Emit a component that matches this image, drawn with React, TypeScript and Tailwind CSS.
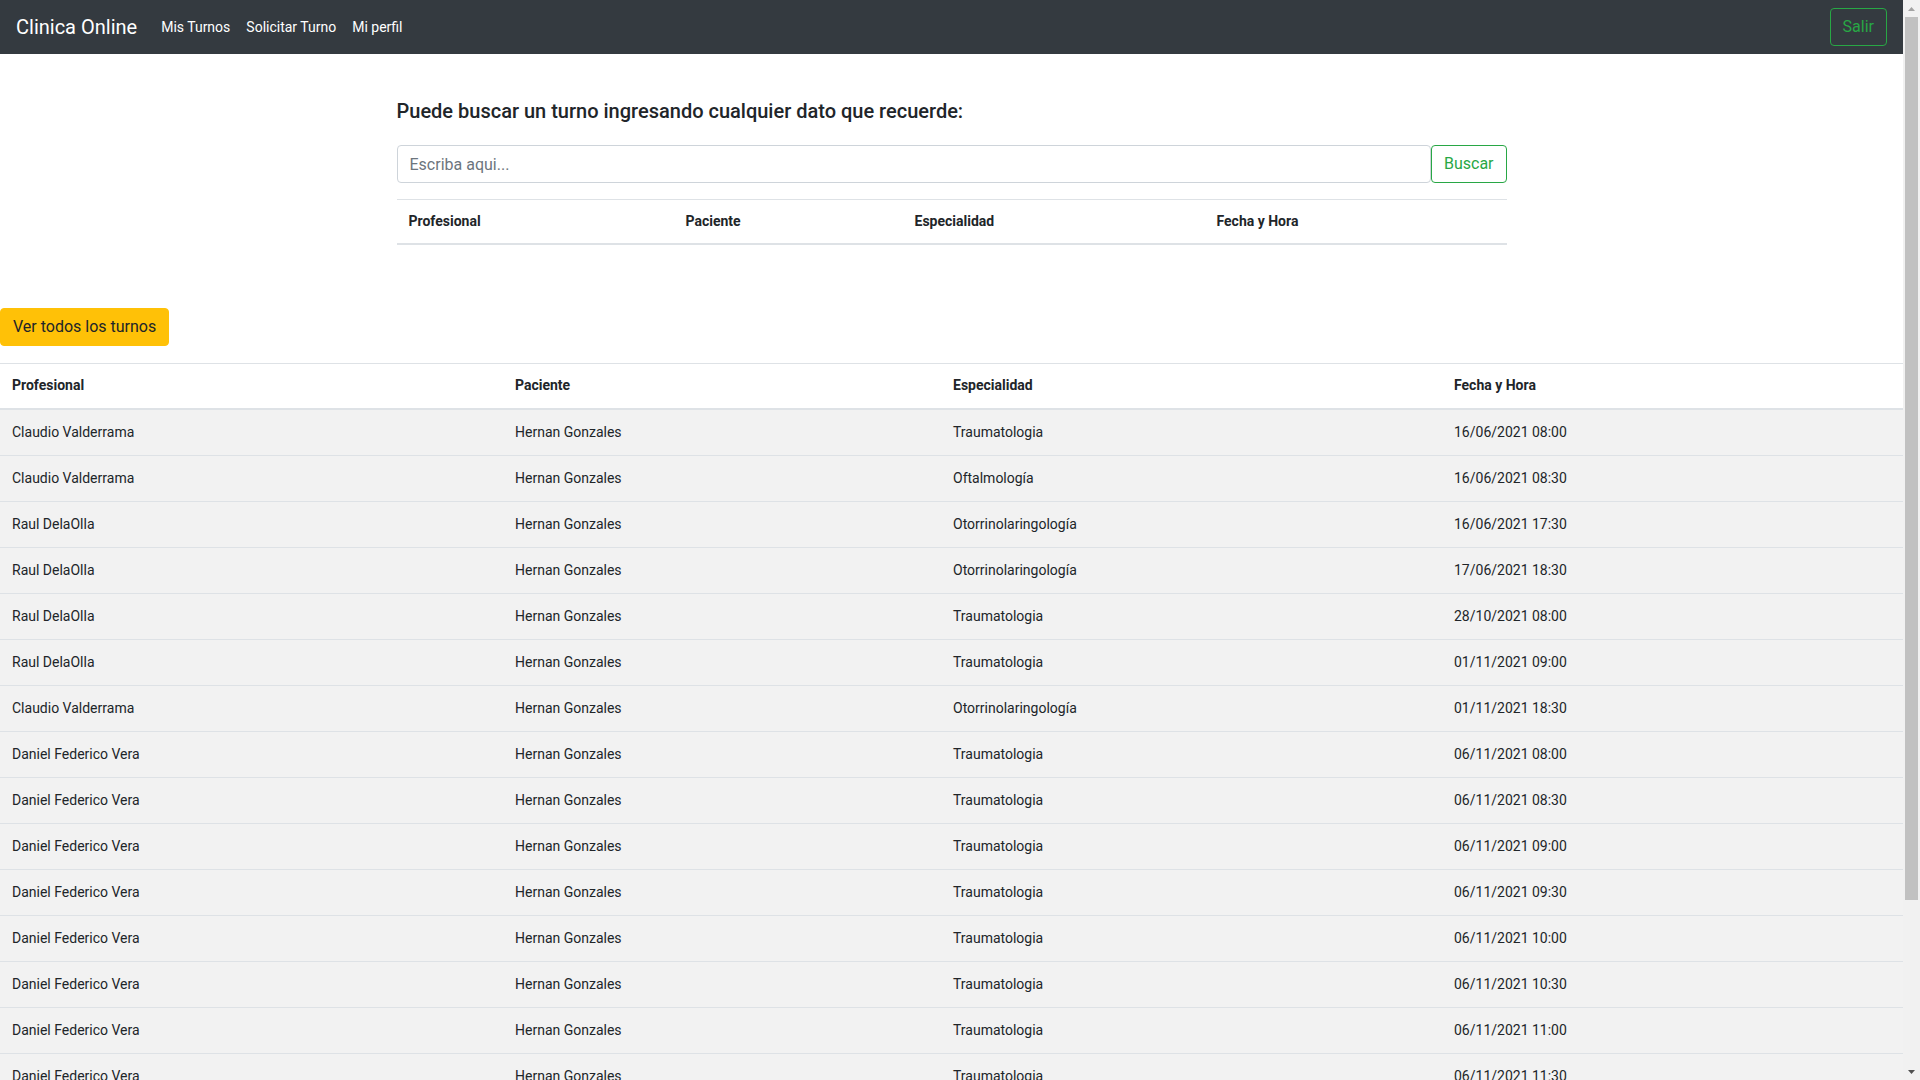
import React from 'react';

const navLinks = ['Mis Turnos', 'Solicitar Turno', 'Mi perfil'];

const turnos = [
  ['Claudio Valderrama', 'Hernan Gonzales', 'Traumatologia', '16/06/2021 08:00'],
  ['Claudio Valderrama', 'Hernan Gonzales', 'Oftalmología', '16/06/2021 08:30'],
  ['Raul DelaOlla', 'Hernan Gonzales', 'Otorrinolaringología', '16/06/2021 17:30'],
  ['Raul DelaOlla', 'Hernan Gonzales', 'Otorrinolaringología', '17/06/2021 18:30'],
  ['Raul DelaOlla', 'Hernan Gonzales', 'Traumatologia', '28/10/2021 08:00'],
  ['Raul DelaOlla', 'Hernan Gonzales', 'Traumatologia', '01/11/2021 09:00'],
  ['Claudio Valderrama', 'Hernan Gonzales', 'Otorrinolaringología', '01/11/2021 18:30'],
  ['Daniel Federico Vera', 'Hernan Gonzales', 'Traumatologia', '06/11/2021 08:00'],
  ['Daniel Federico Vera', 'Hernan Gonzales', 'Traumatologia', '06/11/2021 08:30'],
  ['Daniel Federico Vera', 'Hernan Gonzales', 'Traumatologia', '06/11/2021 09:00'],
  ['Daniel Federico Vera', 'Hernan Gonzales', 'Traumatologia', '06/11/2021 09:30'],
  ['Daniel Federico Vera', 'Hernan Gonzales', 'Traumatologia', '06/11/2021 10:00'],
  ['Daniel Federico Vera', 'Hernan Gonzales', 'Traumatologia', '06/11/2021 10:30'],
  ['Daniel Federico Vera', 'Hernan Gonzales', 'Traumatologia', '06/11/2021 11:00'],
  ['Daniel Federico Vera', 'Hernan Gonzales', 'Traumatologia', '06/11/2021 11:30'],
  ['Daniel Federico Vera', 'Hernan Gonzales', 'Traumatologia', '06/11/2021 12:00'],
  ['Daniel Federico Vera', 'Hernan Gonzales', 'Traumatologia', '06/11/2021 12:30'],
  ['Daniel Federico Vera', 'Hernan Gonzales', 'Traumatologia', '06/11/2021 13:00'],
  ['Daniel Federico Vera', 'Hernan Gonzales', 'Traumatologia', '06/11/2021 13:30'],
];

const headers = ['Profesional', 'Paciente', 'Especialidad', 'Fecha y Hora'];

function Scrollbar() {
  return (
    <div className="w-[17px] shrink-0 bg-[#f1f1f1] flex flex-col items-center">
      <div className="h-[17px] flex items-center justify-center">
        <svg width="7" height="4" viewBox="0 0 7 4">
          <path d="M0 4 L3.5 0 L7 4 Z" fill="#a3a3a3" />
        </svg>
      </div>
      <div className="w-[13px] h-[883px] bg-[#c1c1c1]" />
      <div className="flex-1" />
      <div className="h-[17px] flex items-center justify-center">
        <svg width="7" height="4" viewBox="0 0 7 4">
          <path d="M0 0 L3.5 4 L7 0 Z" fill="#505050" />
        </svg>
      </div>
    </div>
  );
}

export default function App() {
  return (
    <div className="h-screen flex bg-white text-[#212529] font-['Roboto',sans-serif]">
      <div className="flex-1 min-w-0 overflow-y-auto [scrollbar-width:none]">
        {/* Navbar */}
        <nav className="h-[54px] bg-[#343a40] flex items-center px-4">
          <span className="text-[20px] leading-[30px] text-white mr-4">Clinica Online</span>
          <div className="flex items-center text-[14px]">
            {navLinks.map((link) => (
              <a key={link} className="px-2 text-white">
                {link}
              </a>
            ))}
          </div>
          <button className="ml-auto h-[38px] px-3 text-[16px] leading-6 text-[#28a745] border border-[#28a745] rounded">
            Salir
          </button>
        </nav>

        {/* Busqueda */}
        <div className="w-[1140px] mx-auto px-[15px] pt-[45px]">
          <h5 className="text-[20px] leading-6 font-medium">Puede buscar un turno ingresando cualquier dato que recuerde:</h5>
          <div className="flex mt-[22px]">
            <input
              placeholder="Escriba aqui..."
              className="flex-1 h-[38px] px-3 text-[16px] border border-[#ced4da] rounded placeholder:text-[#6c757d] outline-none"
            />
            <button className="h-[38px] px-3 text-[16px] leading-6 text-[#28a745] border border-[#28a745] rounded">
              Buscar
            </button>
          </div>
          <table className="w-full table-fixed mt-4 text-[14px] border-collapse">
            <colgroup>
              <col className="w-[277px]" />
              <col className="w-[229px]" />
              <col className="w-[302px]" />
              <col />
            </colgroup>
            <thead>
              <tr className="border-t border-[#dee2e6] border-b-2">
                {headers.map((h) => (
                  <th key={h} className="h-[44px] px-3 text-left font-bold leading-[21px] align-middle">
                    {h}
                  </th>
                ))}
              </tr>
            </thead>
          </table>
        </div>

        {/* Todos los turnos */}
        <button className="mt-[63px] h-[38px] px-3 text-[16px] leading-6 bg-[#ffc107] text-[#212529] border border-[#ffc107] rounded">
          Ver todos los turnos
        </button>

        <table className="w-full table-fixed mt-[17px] text-[14px] border-collapse">
          <colgroup>
            <col className="w-[503px]" />
            <col className="w-[438px]" />
            <col className="w-[501px]" />
            <col />
          </colgroup>
          <thead>
            <tr className="border-t border-[#dee2e6] border-b-2">
              {headers.map((h) => (
                <th key={h} className="h-[46px] px-3 text-left font-bold leading-[21px] align-middle">
                  {h}
                </th>
              ))}
            </tr>
          </thead>
          <tbody>
            {turnos.map((t, i) => (
              <tr key={i} className="bg-[#f2f2f2] border-b border-[#dee2e6]">
                {t.map((c, j) => (
                  <td key={j} className="h-[46px] px-3 leading-[21px] align-middle">
                    {c}
                  </td>
                ))}
              </tr>
            ))}
          </tbody>
        </table>
      </div>
      <Scrollbar />
    </div>
  );
}
